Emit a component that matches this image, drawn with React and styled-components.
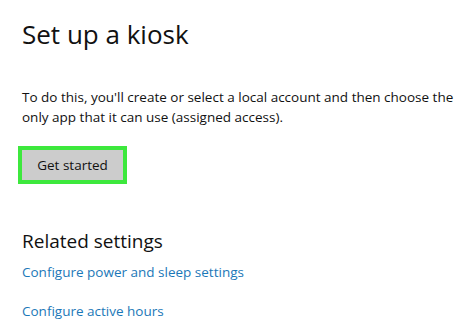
import React from "react";
import styled, { createGlobalStyle } from "styled-components";

const GlobalStyle = createGlobalStyle`
  html, body {
    margin: 0;
    padding: 0;
    background: #ffffff;
  }
  body {
    font-family: "Open Sans", "Noto Sans", sans-serif;
    color: #111111;
  }
`;

const Page = styled.div`
  width: 460px;
  height: 320px;
  overflow: hidden;
  padding: 16px 0 0 22px;
  box-sizing: border-box;
`;

const Title = styled.h1`
  margin: 0;
  font-size: 26px;
  font-weight: 400;
  line-height: 36px;
  letter-spacing: 0;
`;

const Text = styled.p`
  margin: 35px 0 0;
  font-size: 13.5px;
  line-height: 20px;
  letter-spacing: 0;
  white-space: nowrap;
`;

const Highlight = styled.div`
  display: inline-block;
  margin: 19px 0 0 -4px;
  border: 4px solid #3de83d;
`;

const Button = styled.button`
  display: block;
  width: 101px;
  height: 30px;
  border: 0;
  background: #cccccc;
  font-family: inherit;
  font-size: 13.5px;
  letter-spacing: 0;
  color: #111111;
  padding: 0;
`;

const Section = styled.h2`
  margin: 44px 0 0;
  font-size: 19px;
  font-weight: 400;
  line-height: 26px;
  letter-spacing: 0;
`;

const Link = styled.a`
  display: block;
  margin-top: ${(p) => p.$gap}px;
  font-size: 13.5px;
  line-height: 20px;
  letter-spacing: 0;
  color: #1b78b8;
  text-decoration: none;
`;

export default function App() {
  return (
    <>
      <GlobalStyle />
      <Page>
        <Title>Set up a kiosk</Title>
        <Text>
          To do this, you'll create or select a local account and then choose the
          <br />
          only app that it can use (assigned access).
        </Text>
        <Highlight>
          <Button>Get started</Button>
        </Highlight>
        <Section>Related settings</Section>
        <Link href="#" $gap={8}>Configure power and sleep settings</Link>
        <Link href="#" $gap={19}>Configure active hours</Link>
      </Page>
    </>
  );
}
